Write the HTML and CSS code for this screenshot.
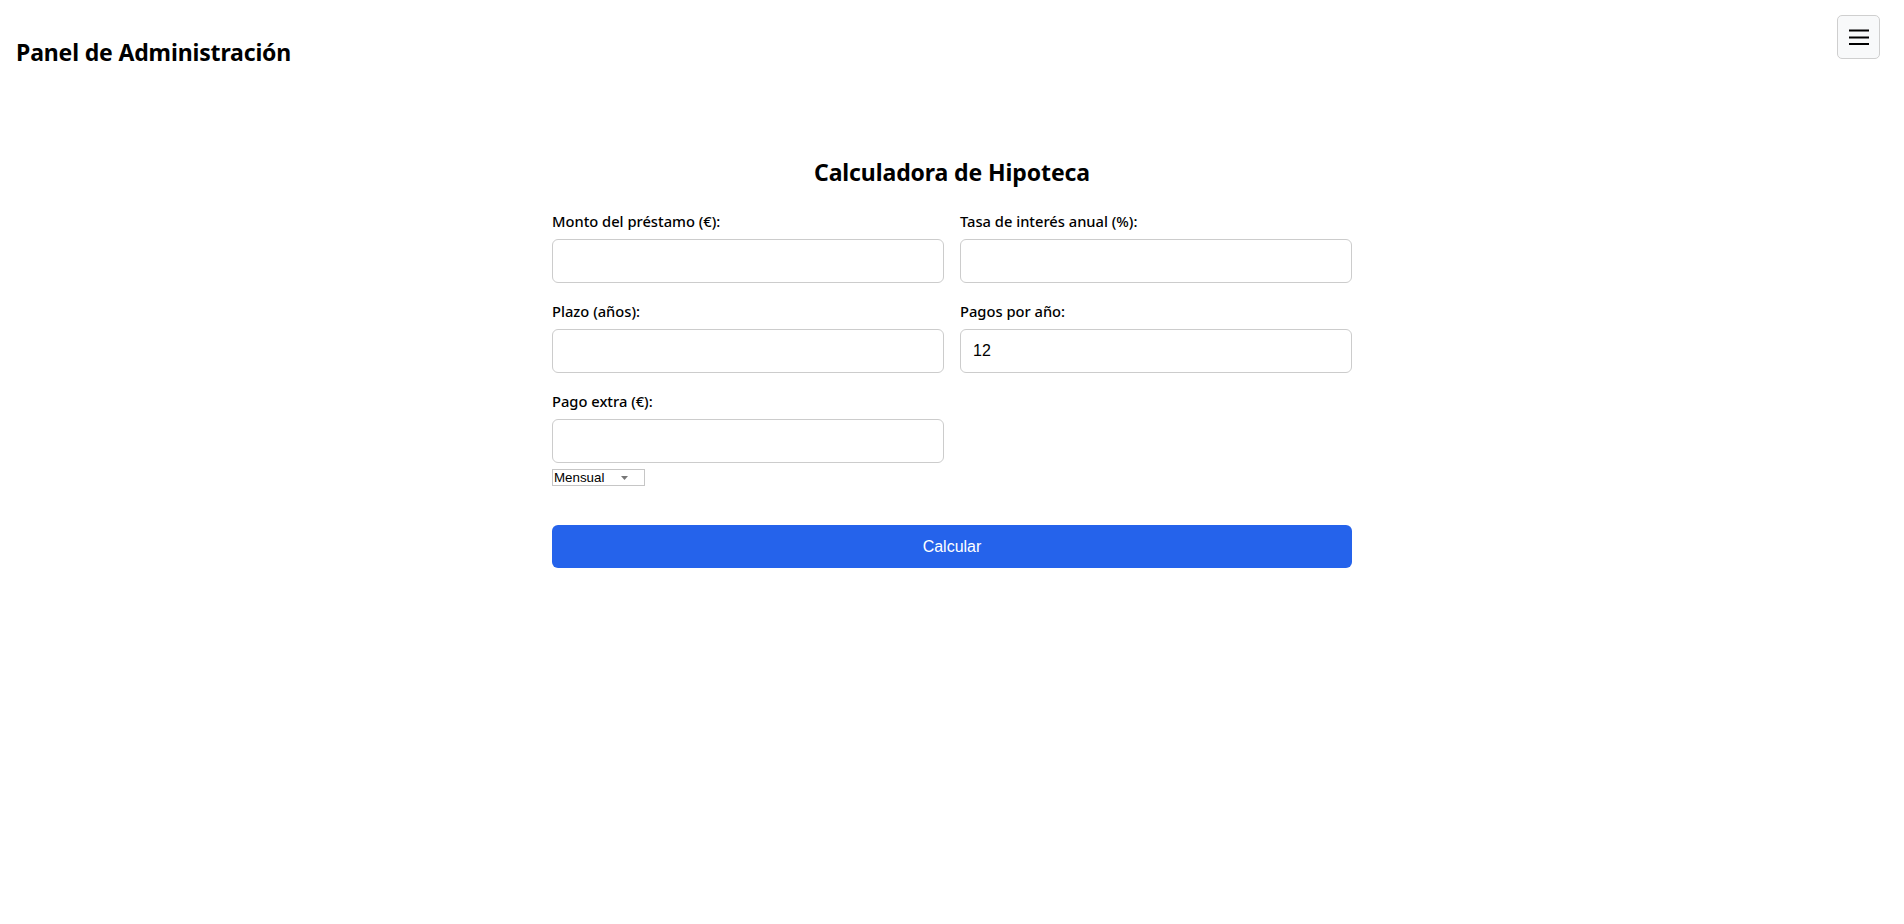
FILE: index.html
```html
<!DOCTYPE html>
<html lang="es">
<head>
<meta charset="utf-8">
<title>Panel de Administración</title>
<link rel="stylesheet" href="styles.css">
</head>
<body>
<header class="topbar">
  <h1 class="brand">Panel de Administración</h1>
  <button class="menu-toggle" type="button" aria-label="Menú">
    <svg width="20" height="16" viewBox="0 0 20 16" aria-hidden="true">
      <rect x="0" y="0.5" width="20" height="2" fill="#000"/>
      <rect x="0" y="7.5" width="20" height="2" fill="#000"/>
      <rect x="0" y="14" width="20" height="2" fill="#000"/>
    </svg>
  </button>
</header>
<main class="calc">
  <h2 class="calc-title">Calculadora de Hipoteca</h2>
  <form class="calc-form">
    <div class="field">
      <label class="field-label">Monto del préstamo (€):</label>
      <input class="field-input" type="text">
    </div>
    <div class="field">
      <label class="field-label">Tasa de interés anual (%):</label>
      <input class="field-input" type="text">
    </div>
    <div class="field">
      <label class="field-label">Plazo (años):</label>
      <input class="field-input" type="text">
    </div>
    <div class="field">
      <label class="field-label">Pagos por año:</label>
      <input class="field-input" type="text" value="12">
    </div>
    <div class="field">
      <label class="field-label">Pago extra (€):</label>
      <input class="field-input" type="text">
      <div class="select-box">
        <select class="select-native">
          <option>Mensual</option>
          <option>Anual</option>
          <option>Único</option>
        </select>
        <svg class="select-arrow" width="7" height="4" viewBox="0 0 7 4" aria-hidden="true">
          <path d="M0 0 H7 L3.5 4 Z" fill="#777"/>
        </svg>
      </div>
    </div>
    <button class="calc-btn" type="button">Calcular</button>
  </form>
</main>
</body>
</html>
```
FILE: styles.css
```css
* {
  box-sizing: border-box;
}

html, body {
  margin: 0;
  padding: 0;
  background: #fff;
  color: #000;
}

body {
  font-family: "Noto Sans", "Open Sans", sans-serif;
}

.topbar {
  display: flex;
  justify-content: space-between;
  align-items: flex-start;
  padding: 15px 24px 0 16px;
}

.brand {
  margin: 21px 0 0 0;
  font-size: 23px;
  line-height: 32px;
  font-weight: 700;
  letter-spacing: -0.15px;
}

.menu-toggle {
  width: 43px;
  height: 44px;
  display: flex;
  align-items: center;
  justify-content: center;
  padding: 0;
  background: #f8f9fa;
  border: 1px solid #cfcfcf;
  border-radius: 5px;
  cursor: pointer;
}

.calc {
  width: 800px;
  margin: 88px auto 0;
}

.calc-title {
  margin: 0 0 23px 0;
  text-align: center;
  font-size: 23px;
  line-height: 32px;
  font-weight: 700;
  letter-spacing: -0.1px;
}

.calc-form {
  display: grid;
  grid-template-columns: 1fr 1fr;
  column-gap: 16px;
}

.field {
  display: flex;
  flex-direction: column;
  align-items: flex-start;
  margin-bottom: 18px;
}

.field-label {
  display: block;
  font-size: 14.7px;
  line-height: 20px;
  font-weight: 500;
  margin-bottom: 8px;
}

.field-input {
  width: 100%;
  height: 44px;
  padding: 0 12px;
  font-family: "Liberation Sans", Arial, sans-serif;
  font-size: 16px;
  color: #000;
  border: 1px solid #ccc;
  border-radius: 6px;
  background: #fff;
  outline: none;
}

.select-box {
  margin-top: 6px;
  width: 93px;
  height: 17px;
  display: flex;
  align-items: center;
  border: 1px solid #c6c6c6;
  background: #fff;
}

.select-native {
  flex: 1;
  min-width: 0;
  height: 15px;
  appearance: none;
  -webkit-appearance: none;
  border: none;
  background: transparent;
  padding: 0 0 0 1px;
  margin: 0;
  font-family: "Liberation Sans", Arial, sans-serif;
  font-size: 13.33px;
  line-height: 15px;
  color: #000;
  outline: none;
}

.select-arrow {
  margin-right: 16px;
  flex: none;
}

.calc-btn {
  grid-column: 1 / -1;
  margin-top: 21px;
  height: 43px;
  border: none;
  border-radius: 6px;
  background: #2563eb;
  color: #fff;
  font-family: "Liberation Sans", Arial, sans-serif;
  font-size: 16px;
  cursor: pointer;
}
```
